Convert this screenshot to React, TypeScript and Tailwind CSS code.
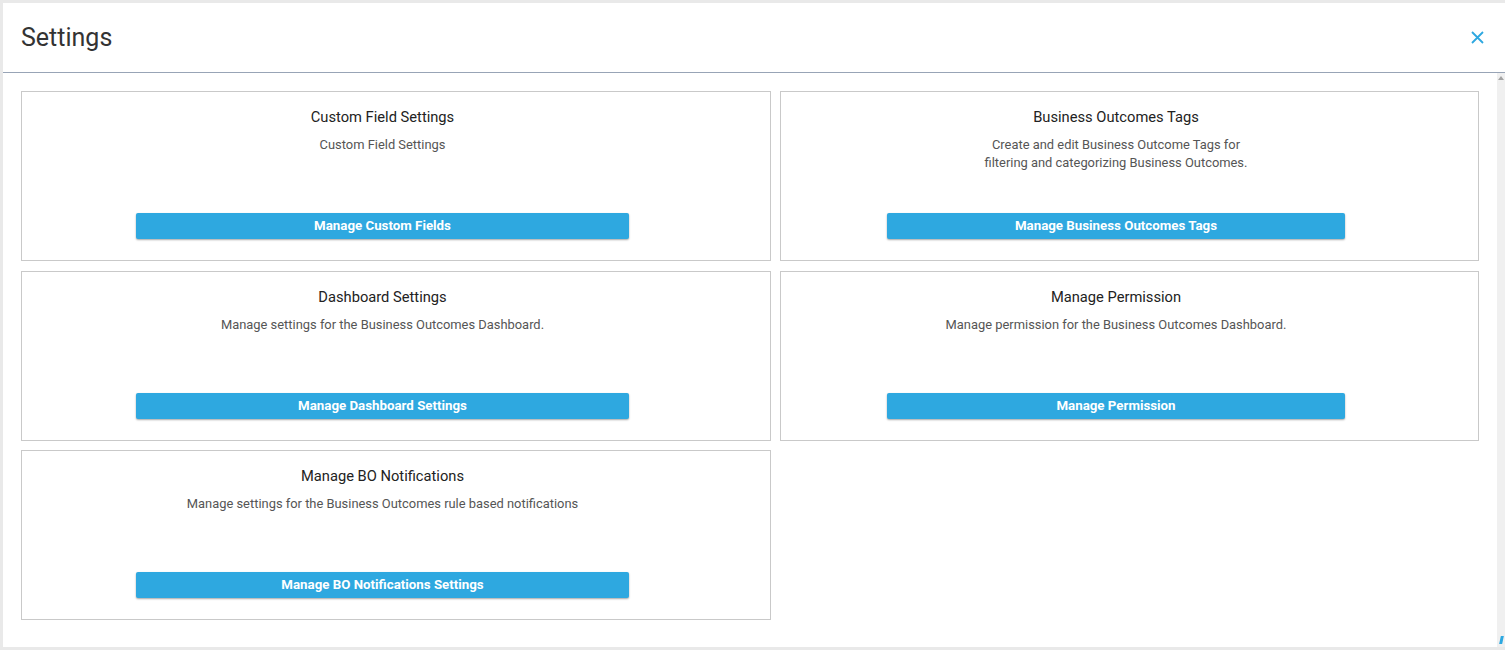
const cards = [
  {
    title: 'Custom Field Settings',
    desc: ['Custom Field Settings'],
    button: 'Manage Custom Fields',
  },
  {
    title: 'Business Outcomes Tags',
    desc: ['Create and edit Business Outcome Tags for', 'filtering and categorizing Business Outcomes.'],
    button: 'Manage Business Outcomes Tags',
  },
  {
    title: 'Dashboard Settings',
    desc: ['Manage settings for the Business Outcomes Dashboard.'],
    button: 'Manage Dashboard Settings',
  },
  {
    title: 'Manage Permission',
    desc: ['Manage permission for the Business Outcomes Dashboard.'],
    button: 'Manage Permission',
  },
  {
    title: 'Manage BO Notifications',
    desc: ['Manage settings for the Business Outcomes rule based notifications'],
    button: 'Manage BO Notifications Settings',
  },
]

function SettingCard({ title, desc, button }: { title: string; desc: string[]; button: string }) {
  return (
    <div className="h-[170px] border border-[#c9c9c9] bg-white flex flex-col items-center pt-[15px] pr-[27px]">
      <div className="text-[14.7px] leading-[20px] text-[#222]">{title}</div>
      <div className="mt-[9px] text-[12.9px] leading-[18px] text-[#555] text-center">
        {desc.map((line) => (
          <div key={line}>{line}</div>
        ))}
      </div>
      <button className="mt-auto mb-[21px] w-[68.5%] h-[26px] rounded-[2px] bg-[#2ea8e0] text-white text-[13.3px] font-bold shadow-[0_1px_2px_rgba(0,0,0,0.35)]">
        {button}
      </button>
    </div>
  )
}

export default function App() {
  return (
    <div
      className="w-[1505px] h-[650px] bg-[#e9e9e9] pt-[3px] pl-[3px] pb-[3px]"
      style={{ fontFamily: 'Roboto, "Liberation Sans", sans-serif' }}
    >
      <div className="h-full bg-white flex flex-col">
        {/* header */}
        <div className="h-[70px] shrink-0 flex items-center justify-between pl-[18px] pr-[21px] border-b border-[#98a4b6]">
          <h1 className="text-[25px] text-[#333] leading-none">Settings</h1>
          <svg width="13" height="13" viewBox="0 0 13 13" className="text-[#2ea8e0]">
            <path d="M1 1 L12 12 M12 1 L1 12" stroke="currentColor" strokeWidth="1.8" />
          </svg>
        </div>

        {/* body */}
        <div className="flex flex-1 min-h-0">
          <div className="flex-1 pt-[18px] pl-[18px]">
            <div className="grid grid-cols-[750px_699px] gap-x-[9px] gap-y-[9.5px]">
              {cards.map((c) => (
                <SettingCard key={c.title} {...c} />
              ))}
            </div>
          </div>
          <div className="w-[8px] bg-[#f0f0f0] flex flex-col items-center justify-between py-[3px]">
            <div className="w-0 h-0 border-l-[3px] border-r-[3px] border-b-[4px] border-l-transparent border-r-transparent border-b-[#a3a3a3]" />
            <div className="w-[3px] h-[8px] bg-[#2ea8e0] -skew-x-12" />
          </div>
        </div>
      </div>
    </div>
  )
}
